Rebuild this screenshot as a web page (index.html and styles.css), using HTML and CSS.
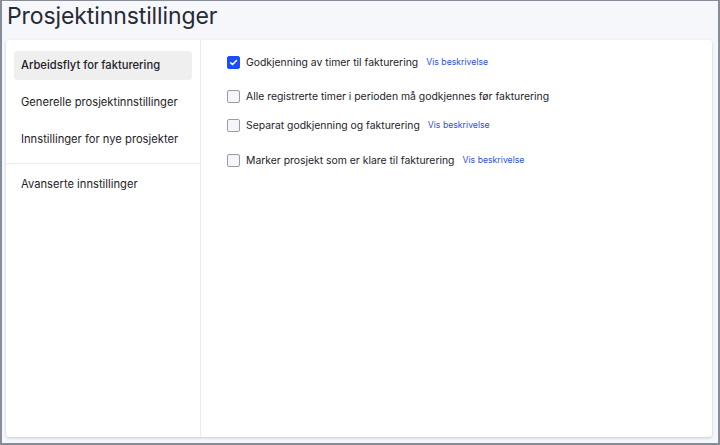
FILE: index.html
```html
<!DOCTYPE html>
<html lang="no">
<head>
<meta charset="utf-8">
<title>Prosjektinnstillinger</title>
<link rel="stylesheet" href="styles.css">
</head>
<body>
<div class="frame">
  <h1 class="title">Prosjektinnstillinger</h1>
  <div class="card">
    <nav class="sidebar">
      <div class="nav-group">
        <a class="nav-item active">Arbeidsflyt for fakturering</a>
        <a class="nav-item">Generelle prosjektinnstillinger</a>
        <a class="nav-item">Innstillinger for nye prosjekter</a>
      </div>
      <div class="nav-group second">
        <a class="nav-item">Avanserte innstillinger</a>
      </div>
    </nav>
    <main class="content">
      <div class="option with-link">
        <span class="box checked"><svg viewBox="0 0 13 13" width="13" height="13"><path d="M3.6 6.7 L5.6 8.6 L9.5 4.6" fill="none" stroke="#fff" stroke-width="1.5" stroke-linecap="round" stroke-linejoin="round"/></svg></span>
        <span class="label">Godkjenning av timer til fakturering</span>
        <a class="link">Vis beskrivelse</a>
      </div>
      <div class="option plain">
        <span class="box"></span>
        <span class="label">Alle registrerte timer i perioden må godkjennes før fakturering</span>
      </div>
      <div class="option with-link third">
        <span class="box"></span>
        <span class="label">Separat godkjenning og fakturering</span>
        <a class="link">Vis beskrivelse</a>
      </div>
      <div class="option with-link">
        <span class="box"></span>
        <span class="label">Marker prosjekt som er klare til fakturering</span>
        <a class="link">Vis beskrivelse</a>
      </div>
    </main>
  </div>
</div>
</body>
</html>
```
FILE: styles.css
```css
* { box-sizing: border-box; }
html, body { margin: 0; padding: 0; }
body {
  font-family: Inter, "Noto Sans", sans-serif;
  color: #22262f;
}
.frame {
  width: 720px;
  height: 445px;
  border: 2px solid #878c99;
  border-top-width: 1px;
  background: #f6f7fb;
  padding: 0 6px 6px 4px;
  display: flex;
  flex-direction: column;
}
.title {
  margin: 0;
  font-size: 23px;
  font-weight: 400;
  line-height: 28px;
  height: 39px;
  padding-top: 1px;
  padding-left: 1px;
  color: #262b36;
  letter-spacing: -0.1px;
}
.card {
  flex: 1;
  background: #fff;
  border-radius: 3px;
  box-shadow: 0 1px 3px rgba(30, 35, 60, 0.22);
  display: flex;
}
.sidebar {
  width: 195px;
  border-right: 1px solid #ececee;
  padding-top: 11px;
}
.nav-group {
  padding: 0 8px 9px 8px;
  display: flex;
  flex-direction: column;
  gap: 8px;
}
.nav-group.second {
  border-top: 1px solid #ececee;
  padding-top: 6px;
}
.nav-item {
  display: block;
  height: 29px;
  line-height: 29px;
  padding-left: 7px;
  font-size: 11.2px;
  color: #1f2229;
  border-radius: 4px;
}
.nav-item.active {
  background: #efeff0;
  font-weight: 500;
}
.content {
  flex: 1;
  padding: 15px 0 0 26px;
}
.option {
  display: flex;
  align-items: center;
  height: 14px;
  margin-bottom: 20px;
  font-size: 10.4px;
}
.option.plain { margin-bottom: 15px; }
.option.third { margin-bottom: 21px; }
.box {
  width: 13px;
  height: 13px;
  border: 1px solid #9a9ca3;
  border-radius: 2px;
  background: #f5f6fa;
  margin-right: 6px;
  flex: none;
  display: flex;
}
.box.checked {
  background: #1b4cff;
  border-color: #1b4cff;
}
.box.checked svg { margin: -1px; }
.label { color: #1f2229; }
.link {
  color: #2c4fdc;
  font-size: 8.7px;
  margin-left: 8px;
}
```
